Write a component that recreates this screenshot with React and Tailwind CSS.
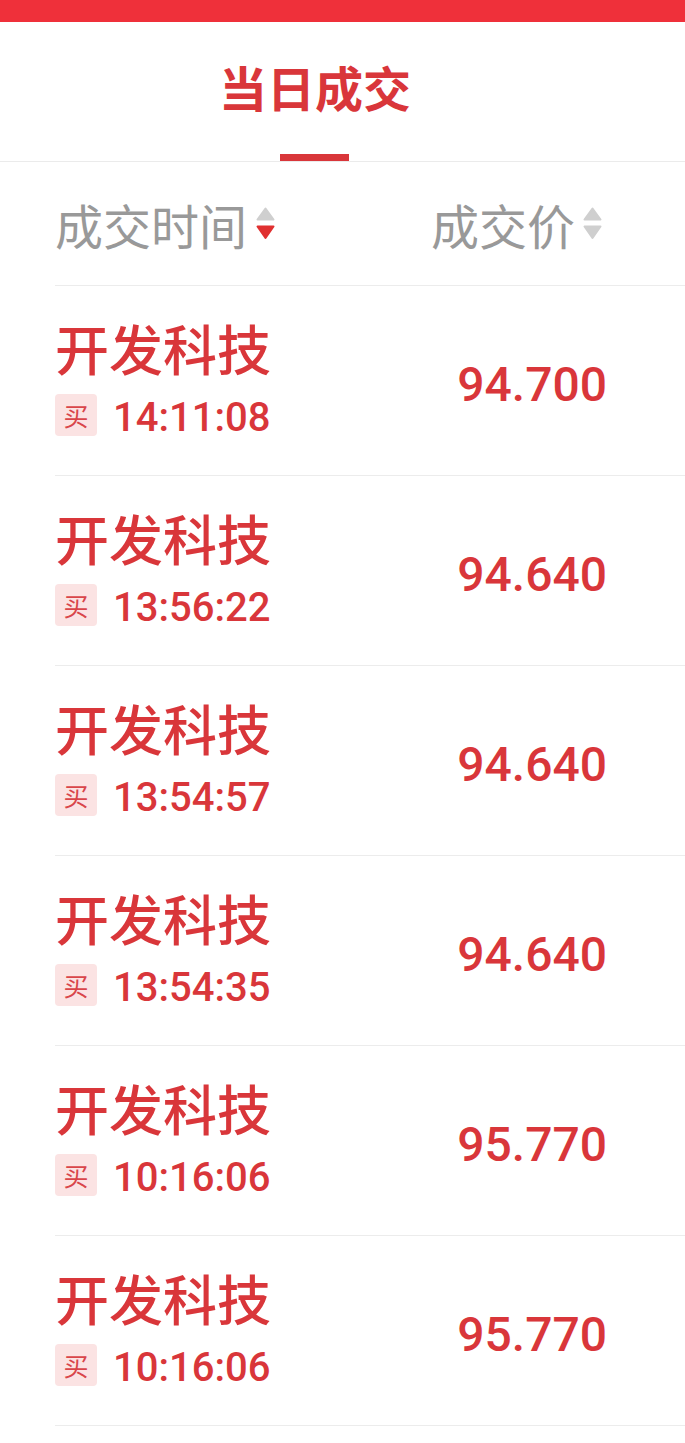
import React from "react";

const trades = [
  { name: "开发科技", side: "买", time: "14:11:08", price: "94.700" },
  { name: "开发科技", side: "买", time: "13:56:22", price: "94.640" },
  { name: "开发科技", side: "买", time: "13:54:57", price: "94.640" },
  { name: "开发科技", side: "买", time: "13:54:35", price: "94.640" },
  { name: "开发科技", side: "买", time: "10:16:06", price: "95.770" },
  { name: "开发科技", side: "买", time: "10:16:06", price: "95.770" },
];

const cjk = "font-['Noto_Sans_CJK_SC','Noto_Sans',sans-serif]";
const num = "font-['Roboto','Liberation_Sans',sans-serif]";

function SortIcon({ active }) {
  return (
    <svg width="19" height="33" viewBox="0 0 19 33" className="shrink-0">
      <polygon points="9.5,1.5 17.5,12.5 1.5,12.5" fill="#cfcfcf" stroke="#cfcfcf" strokeWidth="2" strokeLinejoin="round" />
      <polygon
        points="1.5,19.5 17.5,19.5 9.5,31"
        fill={active ? "#e03030" : "#cfcfcf"}
        stroke={active ? "#e03030" : "#cfcfcf"}
        strokeWidth="2"
        strokeLinejoin="round"
      />
    </svg>
  );
}

function TradeRow({ trade }) {
  return (
    <div className="flex h-[190px] items-center justify-between border-b border-[#ececec] pr-[78px]">
      <div className="flex flex-col pb-[6px]">
        <div className={`${cjk} text-[54px] font-medium leading-[62px] text-[#d9363a]`}>{trade.name}</div>
        <div className="mt-[13px] flex items-center gap-[16px]">
          <span className={`${cjk} flex h-[42px] w-[42px] items-center justify-center rounded-[4px] bg-[#fbe3e3] text-[25px] leading-none text-[#d9464a]`}>
            {trade.side}
          </span>
          <span className={`${num} pt-[6px] text-[40px] font-medium leading-none text-[#d9363a]`}>{trade.time}</span>
        </div>
      </div>
      <div className={`${num} pt-[8px] text-[48px] font-medium leading-none text-[#d9363a]`}>{trade.price}</div>
    </div>
  );
}

export default function App() {
  return (
    <div className="min-h-[1443px] w-full bg-white">
      <div className="h-[22px] bg-[#ef303a]" />
      <div className="flex h-[140px] items-end border-b border-[#ebebeb] pl-[219px]">
        <div className="flex flex-col items-center">
          <div className={`${cjk} text-[48px] font-bold leading-none text-[#d9363a]`}>当日成交</div>
          <div className="mt-[44px] mr-[2px] h-[7px] w-[69px] bg-[#d9363a]" />
        </div>
      </div>
      <div className="ml-[55px]">
        <div className="flex h-[124px] items-center justify-between border-b border-[#ececec] pr-[83px]">
          <div className="flex items-center gap-[9px]">
            <span className={`${cjk} text-[48px] leading-none text-[#999999]`}>成交时间</span>
            <SortIcon active />
          </div>
          <div className="flex items-center gap-[8px]">
            <span className={`${cjk} text-[48px] leading-none text-[#999999]`}>成交价</span>
            <SortIcon />
          </div>
        </div>
        {trades.map((trade, index) => (
          <TradeRow key={index} trade={trade} />
        ))}
      </div>
    </div>
  );
}
